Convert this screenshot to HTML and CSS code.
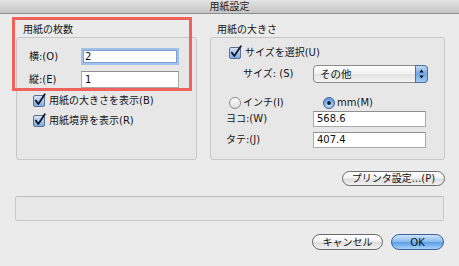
FILE: index.html
```html
<!DOCTYPE html>
<html lang="ja">
<head>
<meta charset="utf-8">
<title>用紙設定</title>
<link rel="stylesheet" href="styles.css">
</head>
<body>
<svg class="defs" width="0" height="0" aria-hidden="true">
  <defs>
    <linearGradient id="cbFill" x1="0" y1="0" x2="0" y2="1">
      <stop offset="0" stop-color="#dbe8f8"/>
      <stop offset="0.5" stop-color="#a9c7ee"/>
      <stop offset="1" stop-color="#7eaae2"/>
    </linearGradient>
    <linearGradient id="rbOff" x1="0" y1="0" x2="0" y2="1">
      <stop offset="0" stop-color="#ffffff"/>
      <stop offset="1" stop-color="#dcdcdc"/>
    </linearGradient>
    <radialGradient id="rbOn" cx="0.5" cy="0.7" r="0.6">
      <stop offset="0" stop-color="#cfe4fb"/>
      <stop offset="1" stop-color="#5e9be0"/>
    </radialGradient>
    <linearGradient id="stepFill" x1="0" y1="0" x2="0" y2="1">
      <stop offset="0" stop-color="#c9def6"/>
      <stop offset="0.5" stop-color="#6ea6e6"/>
      <stop offset="1" stop-color="#a7cdf3"/>
    </linearGradient>
  </defs>
</svg>
<div class="window">
  <header class="titlebar">用紙設定</header>
  <main class="content">
    <div class="groups">
      <section class="group group-count">
        <h2 class="group-label">用紙の枚数</h2>
        <div class="group-box">
          <div class="field-row">
            <span class="field-label">横:(O)</span>
            <div class="textfield focused">2</div>
          </div>
          <div class="field-row">
            <span class="field-label">縦:(E)</span>
            <div class="textfield">1</div>
          </div>
          <div class="check-row">
            <svg class="checkbox" width="14" height="14" viewBox="0 0 14 14"><rect x="0.5" y="2.5" width="11" height="11" rx="1.5" fill="url(#cbFill)" stroke="#5a7191"/><path d="M2.8 7.6 L5.3 11 L11.8 1.2" fill="none" stroke="#10182a" stroke-width="1.8" stroke-linecap="round" stroke-linejoin="round"/></svg>
            <span>用紙の大きさを表示(B)</span>
          </div>
          <div class="check-row">
            <svg class="checkbox" width="14" height="14" viewBox="0 0 14 14"><rect x="0.5" y="2.5" width="11" height="11" rx="1.5" fill="url(#cbFill)" stroke="#5a7191"/><path d="M2.8 7.6 L5.3 11 L11.8 1.2" fill="none" stroke="#10182a" stroke-width="1.8" stroke-linecap="round" stroke-linejoin="round"/></svg>
            <span>用紙境界を表示(R)</span>
          </div>
        </div>
      </section>
      <section class="group group-size">
        <h2 class="group-label">用紙の大きさ</h2>
        <div class="group-box">
          <div class="size-check">
            <svg class="checkbox" width="14" height="14" viewBox="0 0 14 14"><rect x="0.5" y="2.5" width="11" height="11" rx="1.5" fill="url(#cbFill)" stroke="#5a7191"/><path d="M2.8 7.6 L5.3 11 L11.8 1.2" fill="none" stroke="#10182a" stroke-width="1.8" stroke-linecap="round" stroke-linejoin="round"/></svg>
            <span>サイズを選択(U)</span>
          </div>
          <div class="size-select-row">
            <span class="size-label">サイズ: (S)</span>
            <div class="popup">
              <span class="popup-text">その他</span>
              <svg class="stepper" width="13" height="18" viewBox="0 0 13 18"><path d="M0.5 0.5 H9 A3.5 3.5 0 0 1 12.5 4 V14 A3.5 3.5 0 0 1 9 17.5 H0.5 Z" fill="url(#stepFill)" stroke="#4f6f9c"/><path d="M4.3 7.6 L6.5 4.6 L8.7 7.6 Z M4.3 10.4 L6.5 13.4 L8.7 10.4 Z" fill="#111"/></svg>
            </div>
          </div>
          <div class="radio-row">
            <div class="radio-item">
              <svg class="radio" width="12" height="12" viewBox="0 0 12 12"><circle cx="6" cy="6" r="5.5" fill="url(#rbOff)" stroke="#8a8a8a"/></svg>
              <span>インチ(I)</span>
            </div>
            <div class="radio-item">
              <svg class="radio" width="12" height="12" viewBox="0 0 12 12"><circle cx="6" cy="6" r="5.5" fill="url(#rbOn)" stroke="#44679a"/><circle cx="6" cy="6" r="1.9" fill="#111a2a"/></svg>
              <span>mm(M)</span>
            </div>
          </div>
          <div class="dim-row">
            <span class="dim-label">ヨコ:(W)</span>
            <div class="textfield dim">568.6</div>
          </div>
          <div class="dim-row second">
            <span class="dim-label">タテ:(J)</span>
            <div class="textfield dim">407.4</div>
          </div>
        </div>
      </section>
    </div>
    <div class="printer-row">
      <button class="capsule printer">プリンタ設定...(P)</button>
    </div>
    <div class="status-box"></div>
    <div class="actions">
      <button class="capsule cancel">キャンセル</button>
      <button class="capsule ok">OK</button>
    </div>
  </main>
  <div class="annotation"></div>
</div>
</body>
</html>
```

FILE: styles.css
```css
* {
  box-sizing: border-box;
  margin: 0;
  padding: 0;
}

html, body {
  width: 459px;
  height: 266px;
  overflow: hidden;
}

body {
  background: #ebebeb;
  font-family: "DejaVu Sans", "Noto Sans CJK JP", sans-serif;
  font-size: 10px;
  color: #151515;
}

.defs {
  position: absolute;
  width: 0;
  height: 0;
}

.window {
  position: relative;
  width: 459px;
  height: 266px;
}

.titlebar {
  height: 14px;
  line-height: 13px;
  text-align: center;
  font-size: 10px;
  color: #222;
  background: linear-gradient(#e4e4e4, #c4c4c4);
  border-bottom: 1px solid #8e8e8e;
}

.content {
  padding: 0 14px 0 16px;
}

.groups {
  display: flex;
  gap: 13px;
  margin-top: 9px;
}

.group-count {
  width: 181px;
}

.group-size {
  width: 235px;
}

.group-label {
  font-size: 10px;
  font-weight: normal;
  height: 14px;
  line-height: 14px;
  padding-left: 7px;
}

.group-box {
  height: 123px;
  border: 1px solid #c8c8c8;
  border-radius: 3px;
  background: #e7e7e7;
}

/* left group */
.group-count .group-box {
  padding: 10px 0 0 12px;
}

.field-row {
  display: flex;
  align-items: center;
  height: 17px;
}

.field-row + .field-row {
  margin-top: 6px;
}

.field-label {
  width: 52px;
  line-height: 14px;
}

.textfield {
  width: 98px;
  height: 17px;
  border: 1px solid #a9a9a9;
  border-top-color: #8f8f8f;
  background: #fff;
  padding-left: 3px;
  line-height: 15px;
  font-size: 10px;
  color: #111;
}

.textfield.focused {
  border: 2px solid #a2c1ea;
  box-shadow: inset 0 0 0 1px #7c9fd4;
  padding-left: 2px;
  line-height: 13px;
}

.check-row {
  display: flex;
  align-items: center;
  height: 14px;
  margin-top: 6px;
  margin-left: 4px;
  line-height: 14px;
}

.checkbox {
  flex: none;
  margin-right: 2px;
  margin-top: -3px;
}

/* right group */
.size-check {
  display: flex;
  align-items: center;
  height: 14px;
  margin: 8px 0 0 18px;
  line-height: 14px;
}

.size-select-row {
  display: flex;
  align-items: center;
  height: 18px;
  margin: 5px 0 0 32px;
}

.size-label {
  width: 70px;
  line-height: 14px;
}

.popup {
  position: relative;
  display: flex;
  align-items: center;
  width: 115px;
  height: 18px;
  border: 1px solid #8b8b8b;
  border-radius: 4px;
  background: linear-gradient(#ffffff, #f1f1f1 50%, #e2e2e2 51%, #f4f4f4);
  padding-left: 6px;
}

.popup-text {
  flex: 1;
  font-size: 10.5px;
  line-height: 14px;
}

.stepper {
  margin-right: -1px;
  flex: none;
}

.radio-row {
  display: flex;
  align-items: center;
  height: 14px;
  margin: 13px 0 0 18px;
  line-height: 14px;
}

.radio-item {
  display: flex;
  align-items: center;
  gap: 2px;
}

.radio-item:first-child {
  width: 94px;
}

.radio {
  flex: none;
}

.dim-row {
  display: flex;
  align-items: center;
  height: 16px;
  margin: 1px 0 0 15px;
}

.dim-row.second {
  margin-top: 5px;
}

.dim-label {
  width: 87px;
  line-height: 14px;
}

.textfield.dim {
  width: 113px;
  height: 16px;
  line-height: 14px;
}

/* bottom */
.printer-row {
  display: flex;
  justify-content: flex-end;
  margin-top: 11px;
}

.capsule {
  height: 15px;
  border: 1px solid #6a6a6a;
  border-radius: 8px;
  background: linear-gradient(#ffffff, #f3f3f3 45%, #dcdcdc 55%, #f2f2f2);
  font-family: "DejaVu Sans", "Noto Sans CJK JP", sans-serif;
  font-size: 10px;
  line-height: 13px;
  color: #111;
  text-align: center;
  padding: 0;
}

.printer {
  width: 103px;
}

.status-box {
  height: 25px;
  margin: 10px 1px 0 -1px;
  border: 1px solid #c9c9c9;
  border-top-color: #bcbcbc;
  border-radius: 2px;
  background: #e8e8e8;
}

.actions {
  display: flex;
  justify-content: flex-end;
  gap: 8px;
  margin: 13px 1px 0 0;
}

.cancel {
  width: 71px;
  height: 16px;
}

.ok {
  width: 53px;
  height: 16px;
  border-color: #3f6296;
  background: linear-gradient(#cde3fa, #8dbdf0 45%, #5d9fe6 55%, #a9d3f8);
}

/* annotation overlay */
.annotation {
  position: absolute;
  left: 12px;
  top: 17px;
  width: 180px;
  height: 74px;
  border: 3px solid #f0625b;
}
```
